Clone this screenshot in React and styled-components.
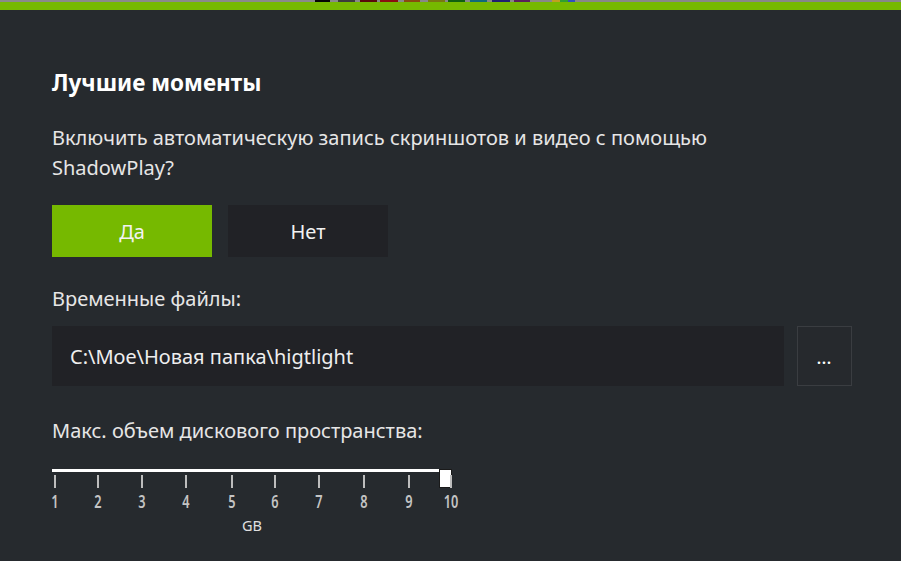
import React from 'react'
import styled, { createGlobalStyle } from 'styled-components'

const GlobalStyle = createGlobalStyle`
  html, body {
    margin: 0;
    padding: 0;
    background: #262a2e;
  }
  body {
    font-family: "Noto Sans", "Open Sans", sans-serif;
    color: #e8e8e8;
  }
`

const strip = [
  ['#8a8a8a', 315], ['#050505', 15], ['#888', 8], ['#3c3c3c', 17], ['#888', 5],
  ['#5a0a0a', 17], ['#888', 3], ['#8a1010', 18], ['#888', 6], ['#8a4a10', 16],
  ['#888', 8], ['#7a7a10', 17], ['#888', 3], ['#106010', 17], ['#888', 5],
  ['#106a7a', 17], ['#888', 5], ['#202070', 18], ['#888', 4], ['#5a205a', 16],
  ['#888', 22], ['#c0a020', 8], ['#30a030', 8], ['#3050c0', 7], ['#888', 326]
]

const Page = styled.div`
  width: 901px;
  height: 561px;
  overflow: hidden;
  background: #262a2e;
`

const ScreenStrip = styled.div`
  display: flex;
  height: 2px;
`

const StripCell = styled.div`
  height: 2px;
  flex: 0 0 auto;
  background: ${p => p.$c};
`

const AccentBar = styled.div`
  height: 8px;
  background: #76b900;
`

const Content = styled.div`
  padding: 58px 0 0 52px;
`

const Title = styled.h2`
  margin: 0;
  font-size: 22.5px;
  font-weight: 700;
  line-height: 30px;
  color: #ffffff;
`

const Question = styled.p`
  margin: 25px 0 0;
  font-size: 20px;
  line-height: 30px;
  color: #e6e6e6;
  width: 690px;
`

const Buttons = styled.div`
  display: flex;
  gap: 16px;
  margin-top: 22px;
`

const Choice = styled.button`
  width: 160px;
  height: 52px;
  border: none;
  padding: 0;
  font-family: inherit;
  font-size: 20px;
  color: #f2f2f2;
  background: ${p => (p.$primary ? '#76b900' : '#212226')};
  cursor: pointer;
`

const Label = styled.div`
  margin-top: ${p => p.$top}px;
  font-size: 20px;
  line-height: 24px;
  color: #e6e6e6;
`

const PathRow = styled.div`
  display: flex;
  gap: 13px;
  margin-top: 15px;
`

const PathField = styled.div`
  width: 732px;
  height: 60px;
  background: #212226;
  display: flex;
  align-items: center;
  padding-left: 18px;
  box-sizing: border-box;
  font-size: 20px;
  color: #eeeeee;
`

const BrowseButton = styled.button`
  width: 55px;
  height: 60px;
  box-sizing: border-box;
  border: 1px solid #3a3d41;
  background: #26292d;
  color: #ffffff;
  font-family: inherit;
  font-size: 14px;
  font-weight: 700;
  letter-spacing: 1px;
  padding: 4px 0 0;
`

const Slider = styled.div`
  position: relative;
  width: 402px;
  margin-top: 26px;
`

const Track = styled.div`
  width: 388px;
  height: 3px;
  margin-top: 7px;
  background: #ffffff;
`

const Thumb = styled.div`
  position: absolute;
  left: 387px;
  top: 0;
  width: 13px;
  height: 19px;
  background: #ffffff;
  border: 1px solid #1a1a1a;
  box-sizing: border-box;
`

const Scale = styled.div`
  position: relative;
  height: 42px;
  margin-top: 3px;
`

const Tick = styled.div`
  position: absolute;
  top: 0;
  width: 2px;
  height: 13px;
  background: #bdbdbd;
`

const TickNum = styled.div`
  position: absolute;
  top: 16px;
  transform: translateX(-50%) scaleX(0.75);
  font-size: 17px;
  line-height: 22px;
  font-weight: 600;
  color: #c4c4c4;
`

const Unit = styled.div`
  margin: -2px 0 0 190px;
  font-size: 14.5px;
  color: #e0e0e0;
`

const ticks = [2, 45, 89, 133, 179, 222, 266, 311, 356, 398]

export default function App() {
  return (
    <Page>
      <GlobalStyle />
      <ScreenStrip>
        {strip.map(([c, w], i) => (
          <StripCell key={i} $c={c} style={{ width: w }} />
        ))}
      </ScreenStrip>
      <AccentBar />
      <Content>
        <Title>Лучшие моменты</Title>
        <Question>
          Включить автоматическую запись скриншотов и видео с помощью ShadowPlay?
        </Question>
        <Buttons>
          <Choice $primary>Да</Choice>
          <Choice>Нет</Choice>
        </Buttons>
        <Label $top={30}>Временные файлы:</Label>
        <PathRow>
          <PathField>C:\Мое\Новая папка\higtlight</PathField>
          <BrowseButton>...</BrowseButton>
        </PathRow>
        <Label $top={33}>Макс. объем дискового пространства:</Label>
        <Slider>
          <Track />
          <Thumb />
          <Scale>
            {ticks.map((x, i) => (
              <React.Fragment key={i}>
                <Tick style={{ left: x }} />
                <TickNum style={{ left: x + 1 }}>{i + 1}</TickNum>
              </React.Fragment>
            ))}
          </Scale>
        </Slider>
        <Unit>GB</Unit>
      </Content>
    </Page>
  )
}
